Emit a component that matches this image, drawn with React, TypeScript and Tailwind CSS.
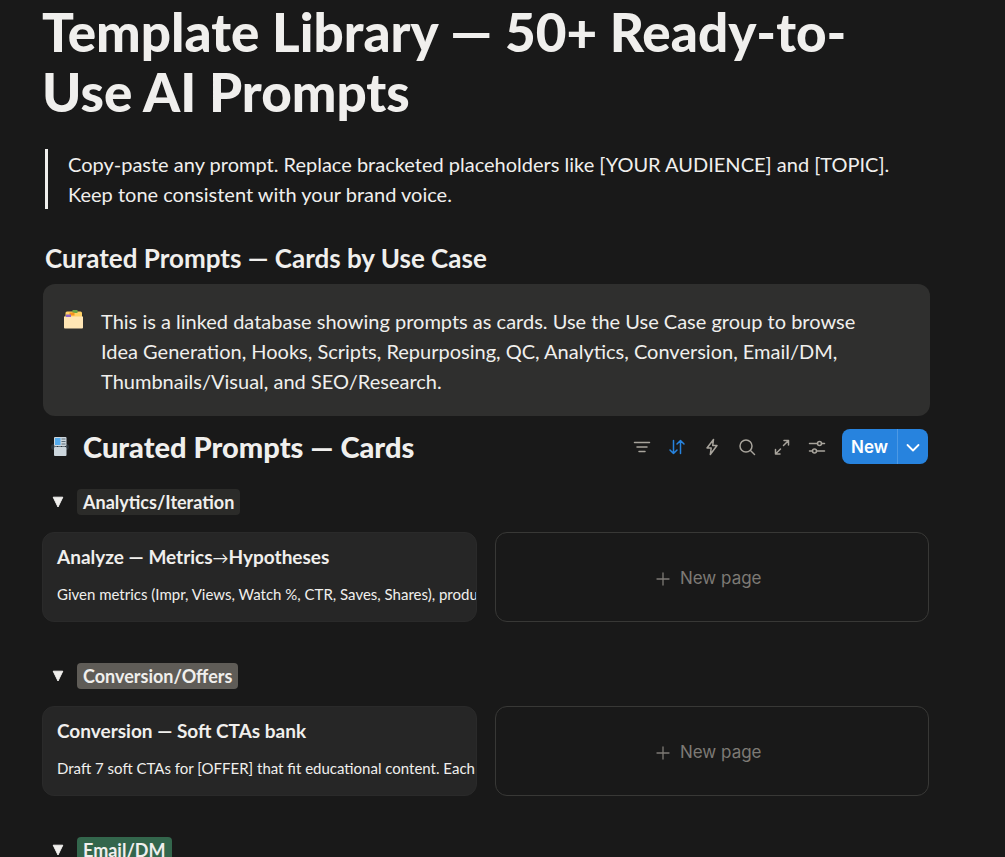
import { useState } from 'react';
import type { ReactNode } from 'react';

type Prompt = { title: string; arrowTitle?: string; text: string };
type Group = { name: string; color: string; prompts: Prompt[] };

const groups: Group[] = [
    {
        name: 'Analytics/Iteration',
        color: 'bg-[#2b2b29]',
        prompts: [
            {
                title: 'Analyze — Metrics',
                arrowTitle: 'Hypotheses',
                text: 'Given metrics (Impr, Views, Watch %, CTR, Saves, Shares), produce 3 hypotheses and next tests.',
            },
        ],
    },
    {
        name: 'Conversion/Offers',
        color: 'bg-[#5f5c57]',
        prompts: [
            {
                title: 'Conversion — Soft CTAs bank',
                text: 'Draft 7 soft CTAs for [OFFER] that fit educational content. Each 1-2 lines, no hype.',
            },
        ],
    },
    {
        name: 'Email/DM',
        color: 'bg-[#33664c]',
        prompts: [],
    },
];

function FolderIcon() {
    return (
        <svg width="22" height="22" viewBox="0 0 22 22" aria-hidden="true">
            <path d="M2.5 4A1.5 1.5 0 0 1 4 2.5h13.500a1.5 1.5 0 0 1 1.5 1.500V9H2.5z" fill="#ffd166" />
            <path d="M9.500 1h5v3H9.5z" fill="#6ba547" />
            <path d="M6.500 3.500h5V6.500h-5z" fill="#f7931e" />
            <path d="M1 7.500h19v11a.9.9 0 0 1-.9.9H1.900a.9.9 0 0 1-.9-.9z" fill="#ffe6b5" />
            <path d="M3 5.500h5v2.500H3z" fill="#8d65c5" />
        </svg>
    );
}

function CardIndexIcon() {
    return (
        <svg width="22" height="22" viewBox="0 0 22 22" aria-hidden="true">
            <rect x="1" y="8" width="18" height="6" rx="3" fill="#2b3238" />
            <rect x="4" y="1" width="12.5" height="9" rx="1" fill="#ccd6dd" />
            <rect x="5" y="2" width="5.5" height="7" fill="#55acee" />
            <path d="M11.5 3h4M11.5 5.500h4M11.5 8h4" stroke="#5c6e7a" />
            <rect x="4" y="11" width="12.5" height="9" rx="1" fill="#ccd6dd" />
            <path d="M4 10.500h12.500" stroke="#66757f" strokeDasharray="3 1" />
        </svg>
    );
}

function ToolButton({ label, active, children }: { label: string; active?: boolean; children: ReactNode }) {
    return (
        <button aria-label={label} className={active ? 'text-[#2783de]' : 'text-[#a8a49c]'}>
            <svg
                width="20"
                height="20"
                viewBox="0 0 20 20"
                fill="none"
                stroke="currentColor"
                strokeWidth="1.5"
                strokeLinecap="round"
                strokeLinejoin="round"
            >
                {children}
            </svg>
        </button>
    );
}

function Toolbar() {
    return (
        <div className="flex items-center gap-[15px]">
            <ToolButton label="Filter">
                <path d="M2.500 5.500h15M5 10h10M7 14.500h6" />
            </ToolButton>
            <ToolButton label="Sort" active>
                <path d="M6.500 3.500v13M3 13l3.500 3.500L10 13M13.500 16.500v-13M10 7l3.500-3.500L17 7" />
            </ToolButton>
            <ToolButton label="Automations">
                <path d="M11.500 2.500 5 11h4.200L8.300 17.500 15 8.500h-4.300z" />
            </ToolButton>
            <ToolButton label="Search">
                <circle cx="9" cy="9" r="6" />
                <path d="m13.500 13.500 4 4" />
            </ToolButton>
            <ToolButton label="Expand">
                <path d="M12 3.500h4.500V8M16.500 3.500l-5 5M8 17H3.500v-4.500M3.500 17l5-5" />
            </ToolButton>
            <ToolButton label="Settings">
                <path d="M2.500 6.500h8M14.500 6.500h3M2.500 14h3M9.500 14h8" />
                <circle cx="12.500" cy="6.500" r="2" />
                <circle cx="7.500" cy="14" r="2" />
            </ToolButton>
            <div className="flex h-[35px] overflow-hidden rounded-lg bg-[#2783de] text-white">
                <button className="border-r border-[#4d99e4] px-[9px] pt-[2px] text-[17px] font-semibold font-['Inter',sans-serif]">
                    New
                </button>
                <button aria-label="More new options" className="px-2">
                    <svg
                        width="14"
                        height="14"
                        viewBox="0 0 14 14"
                        fill="none"
                        stroke="currentColor"
                        strokeWidth="1.8"
                        strokeLinecap="round"
                        strokeLinejoin="round"
                    >
                        <path d="m1.500 5 5.500 5.500L12.500 5" />
                    </svg>
                </button>
            </div>
        </div>
    );
}

function PromptCard({ prompt }: { prompt: Prompt }) {
    return (
        <article className="h-[90px] min-w-0 overflow-hidden rounded-xl border border-[#2a2a2a] bg-[#262626] pt-[10px] pl-[14px]">
            <h3 className="text-[19px] leading-7 font-bold whitespace-nowrap">
                {prompt.title}
                {prompt.arrowTitle && (
                    <>
                        <span className="text-base font-normal">→</span>
                        {prompt.arrowTitle}
                    </>
                )}
            </h3>
            <p className="mt-[11px] overflow-hidden text-[15px] leading-6 whitespace-nowrap">{prompt.text}</p>
        </article>
    );
}

function PromptGroup({ group }: { group: Group }) {
    const [open, setOpen] = useState(true);

    return (
        <section className="mb-[41px]">
            <div className="mb-[17px] flex h-[26px] items-center gap-[13px] pl-[10px]">
                <button aria-label={'Toggle ' + group.name} onClick={() => setOpen(!open)}>
                    <svg width="12" height="12" viewBox="0 0 12 12" className={open ? '' : '-rotate-90'}>
                        <path d="M1.200 1.200h9.600L6 11z" fill="#f0efed" stroke="#f0efed" strokeLinejoin="round" />
                    </svg>
                </button>
                <h3 className={'rounded px-[6px] text-lg leading-[26px] font-bold ' + group.color}>{group.name}</h3>
            </div>
            {open && (
                <div className="grid grid-cols-2 gap-[18px]">
                    {group.prompts.map((prompt) => (
                        <PromptCard key={prompt.title} prompt={prompt} />
                    ))}
                    <button className="flex h-[90px] items-center justify-center gap-[10px] rounded-xl border border-[#383836] pt-1 pr-[6px] text-[17px] text-[#7d7a75] font-['Inter',sans-serif]">
                        <svg
                            width="14"
                            height="14"
                            viewBox="0 0 14 14"
                            stroke="currentColor"
                            strokeWidth="1.3"
                            strokeLinecap="round"
                        >
                            <path d="M7 1v12M1 7h12" />
                        </svg>
                        New page
                    </button>
                </div>
            )}
        </section>
    );
}

export default function App() {
    return (
        <div className="h-screen overflow-hidden bg-[#191919] text-[#f0efed] font-['Lato',sans-serif]">
            <main className="mr-[75px] ml-[42px] pt-[2px]">
                <h1 className="pr-10 text-[53px] leading-[60px] font-black">
                    Template Library — 50+ Ready-to-Use AI Prompts
                </h1>
                <blockquote className="mt-[27px] ml-[3px] border-l-3 border-[#f0efed] pl-5 text-xl leading-[30px]">
                    Copy-paste any prompt. Replace bracketed placeholders like [YOUR AUDIENCE] and [TOPIC].
                    <br />
                    Keep tone consistent with your brand voice.
                </blockquote>
                <h2 className="mt-[33px] ml-[3px] text-[26px] leading-8 font-bold">
                    Curated Prompts — Cards by Use Case
                </h2>
                <aside className="mt-[10px] ml-px flex gap-4 rounded-xl bg-[#2f2f2e] pt-[22px] pr-10 pb-5 pl-5 text-xl leading-[30px]">
                    <div className="shrink-0 pt-[3px]">
                        <FolderIcon />
                    </div>
                    <p>
                        This is a linked database showing prompts as cards. Use the Use Case group to browse Idea
                        Generation, Hooks, Scripts, Repurposing, QC, Analytics, Conversion, Email/DM,
                        Thumbnails/Visual, and SEO/Research.
                    </p>
                </aside>
                <header className="mt-[13px] mb-[25px] flex items-center justify-between pr-[2px] pl-2">
                    <h2 className="flex items-center gap-[11px] text-[29px] leading-[35px] font-black">
                        <CardIndexIcon />
                        Curated Prompts — Cards
                    </h2>
                    <Toolbar />
                </header>
                <div className="pr-px">
                    {groups.map((group) => (
                        <PromptGroup key={group.name} group={group} />
                    ))}
                </div>
            </main>
        </div>
    );
}
